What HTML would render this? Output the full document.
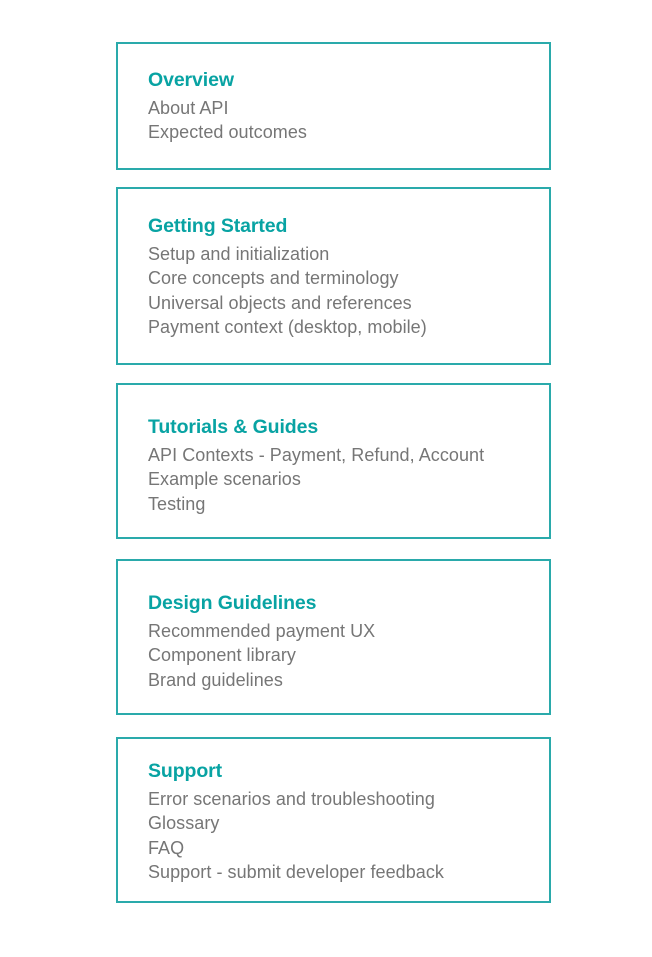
<!DOCTYPE html>
<html><head><style>
body{margin:0;width:652px;height:957px;background:#fff;position:relative;font-family:"Liberation Sans",sans-serif}
.b{position:absolute;left:116px;width:431px;border:2px solid #2aaaab}
.t{position:absolute;left:148px;line-height:24.5px}
.h{color:#08a3a3;font-weight:bold;font-size:19.5px;letter-spacing:-0.1px;margin-bottom:3px}
.l{color:#767676;font-size:18px;letter-spacing:0.05px}
</style></head><body>
<div class="b" style="top:42px;height:124px"></div>
<div class="b" style="top:187px;height:174px"></div>
<div class="b" style="top:383px;height:152px"></div>
<div class="b" style="top:559px;height:152px"></div>
<div class="b" style="top:737px;height:162px"></div>

<div class="t" style="top:68px"><div class="h">Overview</div><div class="l">About API<br>Expected outcomes</div></div>
<div class="t" style="top:214px"><div class="h">Getting Started</div><div class="l">Setup and initialization<br>Core concepts and terminology<br>Universal objects and references<br>Payment context (desktop, mobile)</div></div>
<div class="t" style="top:415px"><div class="h">Tutorials &amp; Guides</div><div class="l">API Contexts - Payment, Refund, Account<br>Example scenarios<br>Testing</div></div>
<div class="t" style="top:591px"><div class="h">Design Guidelines</div><div class="l">Recommended payment UX<br>Component library<br>Brand guidelines</div></div>
<div class="t" style="top:759px"><div class="h">Support</div><div class="l">Error scenarios and troubleshooting<br>Glossary<br>FAQ<br>Support - submit developer feedback</div></div>
</body></html>
